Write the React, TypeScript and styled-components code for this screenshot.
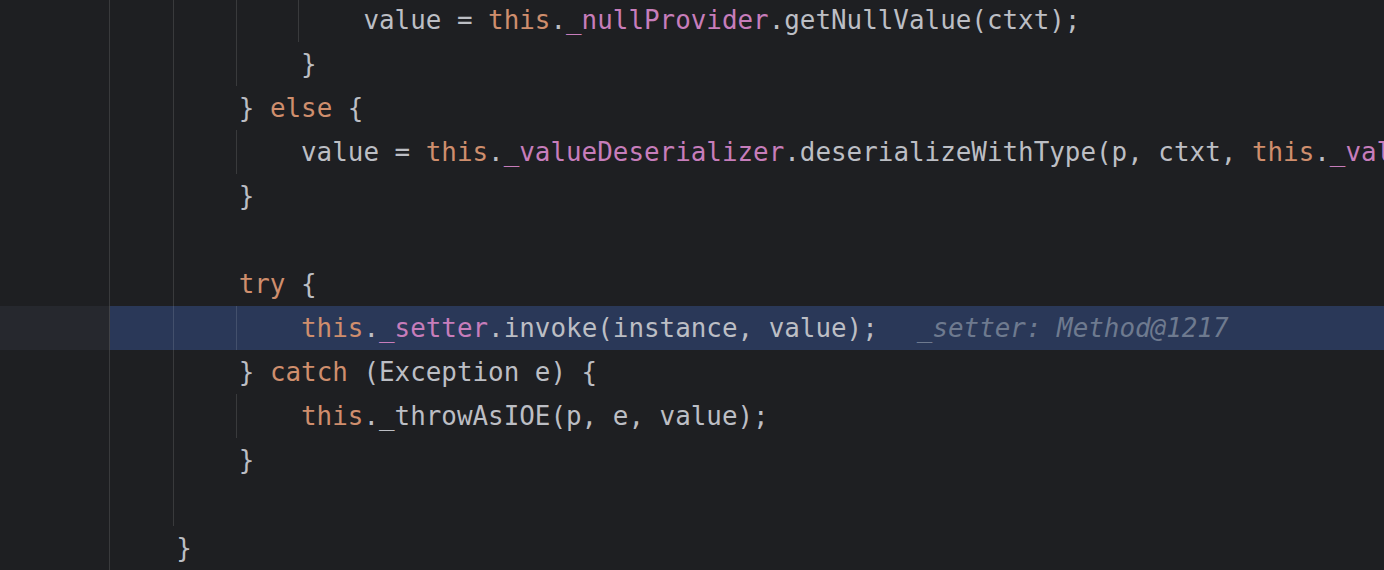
import React from "react";
import styled, { createGlobalStyle } from "styled-components";

const GlobalStyle = createGlobalStyle`
  html, body {
    margin: 0;
    padding: 0;
    background: #1e1f22;
    overflow: hidden;
  }
  body {
    width: 1384px;
    height: 570px;
  }
`;

const Editor = styled.div`
  display: flex;
  flex-direction: column;
  margin-top: -2px;
  width: 1384px;
  font-family: "DejaVu Sans Mono", "Liberation Mono", monospace;
  font-size: 25.9px;
  color: #bcbec4;
`;

const Row = styled.div`
  display: flex;
  height: 44px;
`;

const Gutter = styled.div<{ $current?: boolean }>`
  flex: 0 0 109px;
  background: ${(p) => (p.$current ? "#26282e" : "#1e1f22")};
  border-right: 1px solid rgba(255, 255, 255, 0.12);
`;

const Code = styled.div<{ $current?: boolean }>`
  flex: 1;
  display: flex;
  align-items: stretch;
  padding-left: 4px;
  background: ${(p) => (p.$current ? "#2a3858" : "#1e1f22")};
  white-space: pre;
  line-height: 44px;
  overflow: hidden;
`;

const Indent = styled.span<{ $guide?: boolean }>`
  position: relative;
  flex: 0 0 4ch;
  width: 4ch;
  &::before {
    content: "";
    display: ${(p) => (p.$guide ? "block" : "none")};
    position: absolute;
    left: -3px;
    top: 0;
    bottom: 0;
    width: 1px;
    background: rgba(255, 255, 255, 0.12);
  }
`;

const Text = styled.span`
  display: inline-block;
`;

const Kw = styled.span`
  color: #cf8e6d;
`;

const Field = styled.span`
  color: #c77dbb;
`;

const Hint = styled.span`
  margin-left: 39px;
  color: #6e7a8f;
  font-style: italic;
`;

type Tok = [("p" | "k" | "f"), string];

interface Line {
  indent: number;
  guides: number[];
  toks: Tok[];
  current?: boolean;
  hint?: string;
}

const lines: Line[] = [
  {
    indent: 4,
    guides: [1, 2, 3],
    toks: [
      ["p", "value = "],
      ["k", "this"],
      ["p", "."],
      ["f", "_nullProvider"],
      ["p", ".getNullValue(ctxt);"],
    ],
  },
  { indent: 3, guides: [1, 2], toks: [["p", "}"]] },
  {
    indent: 2,
    guides: [1],
    toks: [
      ["p", "} "],
      ["k", "else"],
      ["p", " {"],
    ],
  },
  {
    indent: 3,
    guides: [1, 2],
    toks: [
      ["p", "value = "],
      ["k", "this"],
      ["p", "."],
      ["f", "_valueDeserializer"],
      ["p", ".deserializeWithType(p, ctxt, "],
      ["k", "this"],
      ["p", "."],
      ["f", "_valueTypeDeserializer"],
      ["p", ");"],
    ],
  },
  { indent: 2, guides: [1], toks: [["p", "}"]] },
  { indent: 2, guides: [1], toks: [] },
  {
    indent: 2,
    guides: [1],
    toks: [
      ["k", "try"],
      ["p", " {"],
    ],
  },
  {
    indent: 3,
    guides: [1, 2],
    current: true,
    hint: "_setter: Method@1217",
    toks: [
      ["k", "this"],
      ["p", "."],
      ["f", "_setter"],
      ["p", ".invoke(instance, value);"],
    ],
  },
  {
    indent: 2,
    guides: [1],
    toks: [
      ["p", "} "],
      ["k", "catch"],
      ["p", " (Exception e) {"],
    ],
  },
  {
    indent: 3,
    guides: [1, 2],
    toks: [
      ["k", "this"],
      ["p", "._throwAsIOE(p, e, value);"],
    ],
  },
  { indent: 2, guides: [1], toks: [["p", "}"]] },
  { indent: 2, guides: [1], toks: [] },
  { indent: 1, guides: [], toks: [["p", "}"]] },
];

const renderTok = ([kind, text]: Tok, i: number) => {
  if (kind === "k") return <Kw key={i}>{text}</Kw>;
  if (kind === "f") return <Field key={i}>{text}</Field>;
  return <React.Fragment key={i}>{text}</React.Fragment>;
};

export default function App() {
  return (
    <>
      <GlobalStyle />
      <Editor>
        {lines.map((line, li) => (
          <Row key={li}>
            <Gutter $current={line.current} />
            <Code $current={line.current}>
              {Array.from({ length: line.indent }).map((_, k) => (
                <Indent key={k} $guide={line.guides.includes(k)} />
              ))}
              <Text>
                {line.toks.map(renderTok)}
                {line.hint && <Hint>{line.hint}</Hint>}
              </Text>
            </Code>
          </Row>
        ))}
      </Editor>
    </>
  );
}
